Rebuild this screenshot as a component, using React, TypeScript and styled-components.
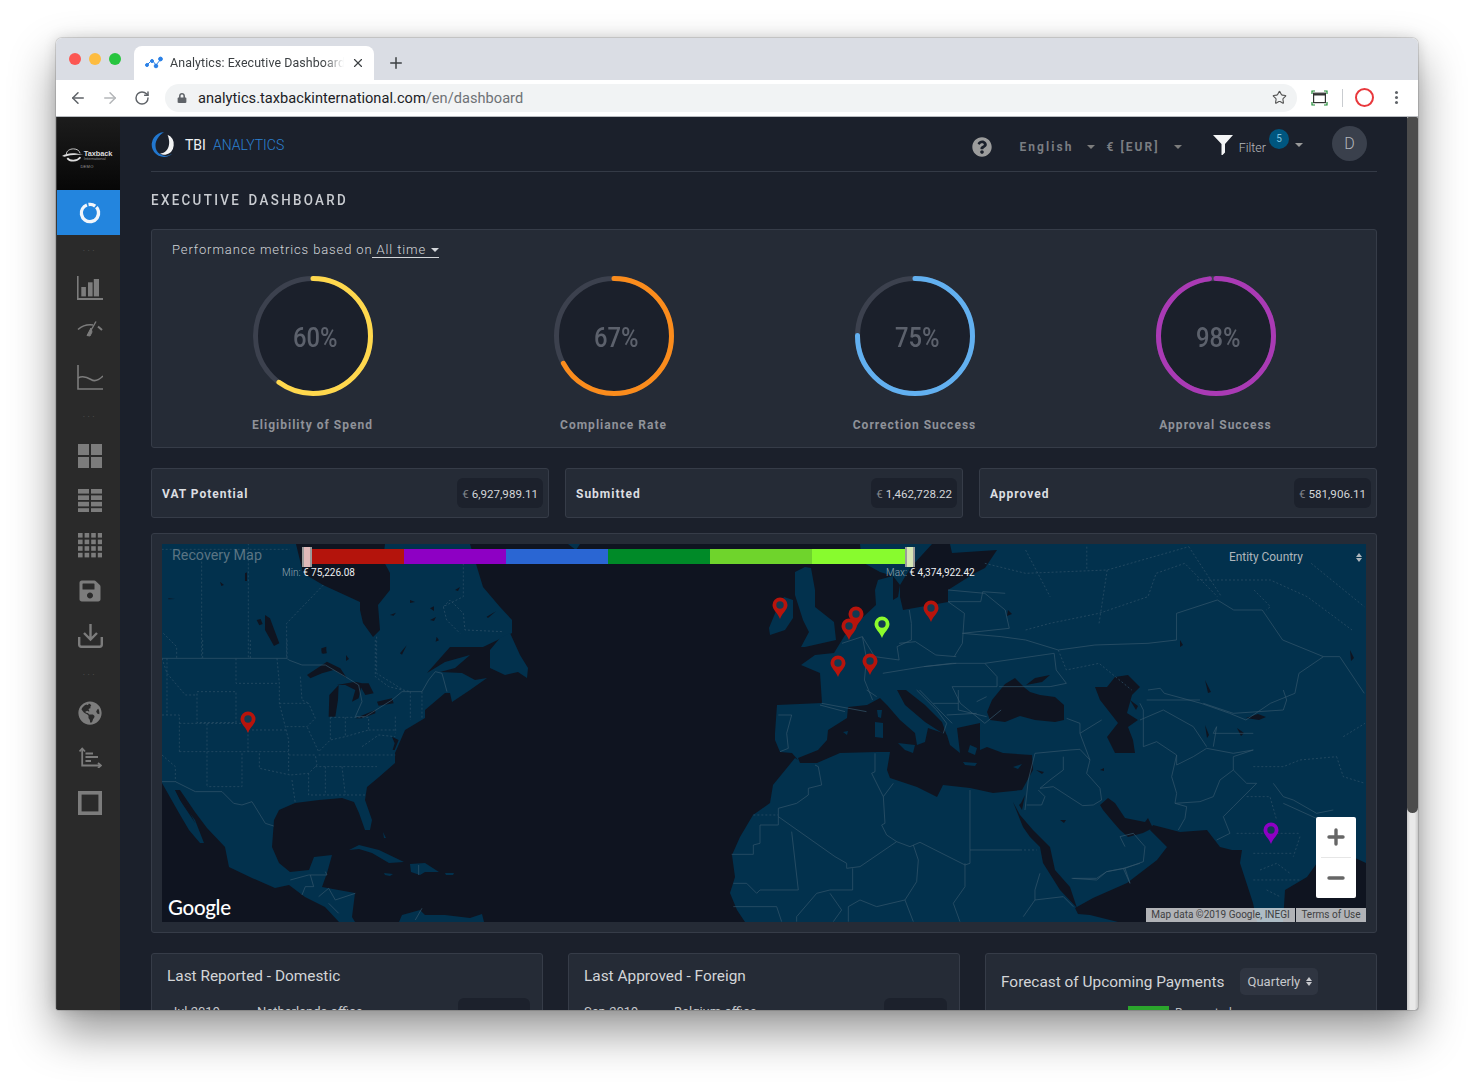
import React from "react";
import styled, { createGlobalStyle } from "styled-components";
import { ArrowLeft, ArrowRight, RotateCw, Star, X, Plus, Minus } from "lucide-react";
import { FaLock, FaSave, FaGlobeAmericas, FaQuestionCircle } from "react-icons/fa";

const Global = createGlobalStyle`
  html, body { margin: 0; padding: 0; background: #fff; height: 1084px; overflow: hidden; }
  * { box-sizing: border-box; }
  body { font-family: Roboto, "Liberation Sans", sans-serif; }
`;

const Stage = styled.div`
  height: 1084px;
  padding: 38px 56px 74px;
`;
const Win = styled.div`
  height: 972px;
  border-radius: 6px 6px 3px 3px;
  overflow: hidden;
  display: flex;
  flex-direction: column;
  background: #fff;
  box-shadow: 0 0 0 1px rgba(0, 0, 0, 0.12), 0 22px 46px rgba(0, 0, 0, 0.42), 0 0 14px rgba(0, 0, 0, 0.14);
`;
const TabStrip = styled.div`
  height: 42px;
  flex: none;
  background: #dadde4;
  display: flex;
  align-items: flex-end;
  padding-left: 13px;
`;
const Lights = styled.div`
  display: flex;
  gap: 8px;
  align-self: flex-start;
  margin-top: 15px;
  width: 65px;
`;
const Light = styled.span<{ $c: string }>`
  width: 12px;
  height: 12px;
  border-radius: 50%;
  background: ${(p) => p.$c};
`;
const Tab = styled.div`
  width: 240px;
  height: 34px;
  background: #fff;
  border-radius: 8px 8px 0 0;
  display: flex;
  align-items: center;
  padding: 0 9px 1px 11px;
  gap: 7px;
  color: #3c4043;
  font: 12.4px "Roboto", sans-serif;
`;
const TabTitle = styled.span`
  flex: 1;
  white-space: nowrap;
  overflow: hidden;
  letter-spacing: 0.1px;
  -webkit-mask-image: linear-gradient(90deg, #000 88%, transparent 100%);
  mask-image: linear-gradient(90deg, #000 88%, transparent 100%);
`;
const NewTab = styled.div`
  height: 34px;
  margin-left: 13px;
  display: flex;
  align-items: center;
  color: #3c4043;
`;
const ToolBar = styled.div`
  height: 37px;
  flex: none;
  background: #fff;
  border-bottom: 1px solid #b9bcc0;
  display: flex;
  align-items: center;
  padding: 0 0 1px 6px;
  color: #5f6368;
`;
const NavBtn = styled.div<{ $dim?: boolean }>`
  width: 32px;
  flex: none;
  display: flex;
  justify-content: center;
  color: ${(p) => (p.$dim ? "#b4b6b9" : "#5f6368")};
`;
const Omni = styled.div`
  width: 1132px;
  flex: none;
  margin-left: 7px;
  height: 28px;
  border-radius: 14px;
  background: #f1f3f4;
  display: flex;
  align-items: center;
  padding: 0 10px 0 12px;
  color: #5f6368;
`;
const Url = styled.div`
  flex: 1;
  margin-left: 11px;
  font: 14.6px "Roboto", sans-serif;
  color: #202124;
  letter-spacing: 0.03px;
  span { color: #6e7276; }
`;
const ExtSep = styled.span`
  width: 1px;
  height: 18px;
  background: #c9ccd0;
  margin: 0 12px 0 14px;
`;
const OperaRing = styled.span`
  width: 19px;
  height: 19px;
  border: 2px solid #e8383c;
  border-radius: 50%;
`;
const MenuDots = styled.span`
  width: 3px;
  height: 3px;
  margin-left: 21px;
  border-radius: 50%;
  background: #5f6368;
  box-shadow: 0 -5px 0 #5f6368, 0 5px 0 #5f6368;
`;
const ExtWrap = styled.div`
  margin-left: 14px;
  display: flex;
`;

const Body = styled.div`
  flex: 1;
  min-height: 0;
  display: flex;
  background: #1b202b;
`;
const Side = styled.nav`
  width: 64px;
  flex: none;
  background: #2a2a2a;
  color: #7c7c7c;
  border-left: 1px solid #3a3a3a;
`;
const BrandBox = styled.div`
  height: 73px;
  background: linear-gradient(#1c1c1c, #070707);
  display: flex;
  flex-direction: column;
  align-items: center;
  justify-content: center;
  padding: 9px 3px 0 0;
  color: #dcdcdc;
`;
const BrandRow = styled.div`
  display: flex;
  align-items: center;
`;
const BrandText = styled.div`
  font: 700 7.4px/7px "Liberation Sans", sans-serif;
  letter-spacing: -0.1px;
  small {
    display: block;
    font: 400 4.2px/4px "Liberation Sans", sans-serif;
    color: #8a8a8a;
  }
`;
const BrandDemo = styled.div`
  font: 400 4px/5px "Liberation Sans", sans-serif;
  color: #9a9a9a;
  letter-spacing: 0.3px;
  margin-top: 1px;
`;
const ActiveItem = styled.div`
  height: 45px;
  background: #2385de;
  display: flex;
  align-items: center;
  justify-content: center;
  padding-left: 3px;
`;
const Dots = styled.div<{ $h: number }>`
  height: ${(p) => p.$h}px;
  display: flex;
  align-items: center;
  justify-content: center;
  font-size: 9px;
  letter-spacing: 2.4px;
  color: #565656;
  line-height: 1;
  padding: 0 0 4px 3px;
`;
const Item = styled.div`
  height: 45px;
  display: flex;
  align-items: center;
  justify-content: center;
  padding-left: 3px;
`;
const GaugeItem = styled(Item)`
  padding-bottom: 8px;
`;

const Scroller = styled.main`
  flex: 1;
  min-width: 0;
  overflow: hidden;
  padding: 0 30px 0 31px;
`;
const ScrollBar = styled.div`
  width: 11px;
  flex: none;
  display: flex;
  flex-direction: column;
  background: linear-gradient(90deg, #c8c8c8, #e9e9e9 30%, #e9e9e9 70%, #c8c8c8);
`;
const Thumb = styled.div`
  height: 696px;
  background: #4c4c4c;
  border-radius: 2px 2px 6px 6px;
`;
const Head = styled.header`
  height: 55px;
  border-bottom: 1px solid #343a46;
  display: flex;
  align-items: center;
`;
const LogoText = styled.div`
  margin-left: 9px;
  padding-top: 2px;
  font: 400 14px "Roboto", sans-serif;
  color: #f0f2f4;
  span { color: #2b80d2; font-weight: 300; margin-left: 7px; }
`;
const HeadRight = styled.div`
  margin-left: auto;
  margin-right: 10px;
  display: flex;
  align-items: center;
  color: #8b8b8b;
  padding-top: 5px;
`;
const HelpIcon = styled.div`
  display: flex;
  color: #9c9c9c;
  margin-right: 28px;
`;
const Lang = styled.span`
  font: 700 12px "Roboto", sans-serif;
  letter-spacing: 2.05px;
  color: #7a7d82;
  white-space: nowrap;
`;
const Caret = styled.span<{ $ml: number; $mr?: number; $c?: string }>`
  width: 0;
  height: 0;
  border-left: 4px solid transparent;
  border-right: 4px solid transparent;
  border-top: 4px solid ${(p) => p.$c || "#7d7d7d"};
  margin-left: ${(p) => p.$ml}px;
  margin-right: ${(p) => p.$mr || 0}px;
`;
const FilterWrap = styled.div`
  margin-left: 31px;
  display: flex;
  align-items: center;
  position: relative;
  padding-bottom: 3px;
`;
const FilterText = styled.span`
  font: 300 12.5px "Roboto", sans-serif;
  color: #b8babd;
  margin: 5px 0 0 6px;
`;
const Badge = styled.span`
  width: 20px;
  height: 20px;
  margin: -12px 0 0 3px;
  border-radius: 50%;
  background: #00567f;
  color: #7ec2de;
  font: 400 10px/20px "Roboto", sans-serif;
  text-align: center;
`;
const Avatar = styled.div`
  width: 35px;
  height: 35px;
  margin: -7px 0 0 29px;
  border-radius: 50%;
  background: #3a404c;
  color: #b4b7bc;
  font: 300 16px/35px "Roboto", sans-serif;
  text-align: center;
`;
const PageTitle = styled.h1`
  height: 57px;
  margin: 0;
  display: flex;
  align-items: center;
  font: 500 14.5px "Roboto", sans-serif;
  letter-spacing: 2.55px;
  color: #c9ccd1;
  word-spacing: 2px;
  transform: scaleX(0.92);
  transform-origin: left center;
`;
const Panel = styled.section`
  background: #252b36;
  border: 1px solid #363c48;
  border-radius: 3px;
`;
const MetricsPanel = styled(Panel)`
  height: 219px;
  padding: 10px;
`;
const MetricsLine = styled.div`
  margin-left: 10px;
  font: 300 13px/20px "Roboto", sans-serif;
  letter-spacing: 0.88px;
  color: #d3d6da;
`;
const AllTime = styled.span`
  display: inline-flex;
  align-items: center;
  border-bottom: 1px solid #d3d6da;
  line-height: 14px;
  padding-left: 4px;
`;
const Gauges = styled.div`
  display: grid;
  grid-template-columns: repeat(4, 1fr);
  margin-top: 16px;
`;
const GaugeCol = styled.div`
  display: flex;
  flex-direction: column;
  align-items: center;
`;
const Ring = styled.div`
  width: 120px;
  height: 120px;
  position: relative;
  margin-left: 1px;
`;
const RingValue = styled.div`
  position: absolute;
  inset: 3px 0 0 5px;
  display: flex;
  align-items: center;
  justify-content: center;
  font: 500 27px "Roboto", sans-serif;
  color: #5c616c;
  span { display: inline-block; transform: scaleX(0.88); }
`;
const GaugeLabel = styled.div`
  margin-top: 21px;
  font: 700 12px/16px "Roboto", sans-serif;
  letter-spacing: 1.02px;
  color: #8f9299;
`;
const StatRow = styled.div`
  display: grid;
  grid-template-columns: repeat(3, 1fr);
  gap: 16px;
  margin-top: 20px;
`;
const StatCard = styled(Panel)`
  height: 50px;
  display: flex;
  align-items: center;
  justify-content: space-between;
  padding: 0 5px 0 10px;
`;
const StatLabel = styled.span`
  font: 700 12px "Roboto", sans-serif;
  letter-spacing: 1px;
  color: #dcdee1;
  padding-top: 1px;
`;
const Chip = styled.span`
  height: 30px;
  display: inline-flex;
  align-items: center;
  padding: 1px 5px 0;
  border-radius: 6px;
  background: #1c212c;
  font: 400 11.6px "Roboto", sans-serif;
  color: #d3d5d8;
  white-space: nowrap;
  em { font-style: normal; color: #7f838a; margin-right: 3px; }
`;
const RowChip = styled(Chip)`
  padding: 1px 9px 0;
`;
const MapPanel = styled(Panel)`
  margin-top: 15px;
  height: 400px;
  padding: 10px;
`;
const MapFrame = styled.div`
  position: relative;
  height: 378px;
  overflow: hidden;
  background: #0f1420;
`;
const MapSvg = styled.svg`
  display: block;
  .land { fill: #02314d; }
  .sea { fill: #0f1420; }
  .b { fill: none; stroke: #34566b; stroke-width: 0.7; vector-effect: non-scaling-stroke; }
  .d { fill: none; stroke: #2f5268; stroke-width: 0.7; stroke-dasharray: 2 2; vector-effect: non-scaling-stroke; }
`;
const MapTitle = styled.div`
  position: absolute;
  left: 10px;
  top: 2px;
  font: 400 14.3px/18px "Roboto", sans-serif;
  color: #5a7483;
`;
const ScaleBar = styled.div`
  position: absolute;
  left: 148px;
  top: 5px;
  width: 596px;
  height: 15px;
  display: flex;
`;
const Seg = styled.div<{ $c: string; $w: number }>`
  width: ${(p) => p.$w}px;
  background: ${(p) => p.$c};
`;
const Handle = styled.div<{ $c: string; $l: number }>`
  position: absolute;
  left: ${(p) => p.$l}px;
  top: 3px;
  width: 10px;
  height: 20px;
  background: ${(p) => p.$c};
  border: 1px solid #9b9b9b;
  border-width: 0 2px;
`;
const ScaleLabel = styled.div<{ $l: number }>`
  position: absolute;
  left: ${(p) => p.$l}px;
  top: 23px;
  font: 400 10px/12px "Roboto", sans-serif;
  color: #eef0f2;
  white-space: nowrap;
  span { color: #93a5b1; font-weight: 300; }
`;
const EntitySelect = styled.div`
  position: absolute;
  right: 4px;
  top: 6px;
  width: 133px;
  display: flex;
  justify-content: space-between;
  align-items: center;
  font: 400 11.9px/15px "Roboto", sans-serif;
  color: #aeb6bc;
`;
const Sorter = styled.span`
  display: flex;
  flex-direction: column;
  gap: 1.5px;
  i {
    display: block;
    width: 0;
    height: 0;
    border-left: 3px solid transparent;
    border-right: 3px solid transparent;
  }
  i:first-child { border-bottom: 4px solid currentColor; }
  i:last-child { border-top: 4px solid currentColor; }
`;
const GoogleMark = styled.div`
  position: absolute;
  left: 6px;
  bottom: 2px;
  font: 500 20.5px/26px "Lato", sans-serif;
  letter-spacing: -0.3px;
  color: #fff;
`;
const Attribution = styled.div`
  position: absolute;
  right: 0;
  bottom: 0;
  display: flex;
  gap: 1px;
`;
const AttrCell = styled.span<{ $w: number }>`
  width: ${(p) => p.$w}px;
  height: 14px;
  background: rgba(255, 255, 255, 0.68);
  font: 400 10px/14px "Roboto", sans-serif;
  color: #3e4042;
  text-align: center;
  white-space: nowrap;
`;
const ZoomCtl = styled.div`
  position: absolute;
  right: 10px;
  top: 273px;
  width: 40px;
  height: 81px;
  background: #fff;
  border-radius: 2px;
  display: flex;
  flex-direction: column;
  align-items: center;
  color: #666;
`;
const ZoomBtn = styled.div`
  height: 40px;
  display: flex;
  align-items: center;
  justify-content: center;
`;
const ZoomLine = styled.div`
  width: 30px;
  height: 1px;
  background: #e6e6e6;
`;
const BottomRow = styled.div`
  display: grid;
  grid-template-columns: repeat(3, 392px);
  gap: 25px;
  margin-top: 20px;
`;
const ListCard = styled(Panel)`
  height: 120px;
  padding: 11px 12px 0 15px;
`;
const CardTitle = styled.div`
  font: 400 15.4px/22px "Roboto", sans-serif;
  color: #d3d5d8;
`;
const ListRow = styled.div`
  display: flex;
  align-items: flex-start;
  margin-top: 11px;
  font: 400 13px/15px "Roboto", sans-serif;
  color: #c6c8cc;
`;
const RowDate = styled.span<{ $pl?: number }>`
  width: 90px;
  padding: 6px 0 0 ${(p) => p.$pl || 0}px;
`;
const RowName = styled.span`
  flex: 1;
  padding-top: 6px;
`;
const ForecastHead = styled.div`
  display: flex;
  align-items: center;
  margin-top: 3px;
`;
const ForecastCard = styled(Panel)`
  height: 120px;
  padding: 11px 15px 0;
`;
const ForecastSelect = styled.div`
  margin-left: 15px;
  width: 78px;
  height: 27px;
  border-radius: 5px;
  background: #2f3541;
  display: flex;
  align-items: center;
  justify-content: space-between;
  padding: 0 6px 0 8px;
  font: 400 13px "Roboto", sans-serif;
  color: #c6c8cc;
`;
const Legend = styled.div`
  display: flex;
  margin: 11px 0 0 127px;
  align-items: flex-start;
  gap: 6px;
  font: 400 12px/14px "Roboto", sans-serif;
  color: #b9bcc0;
`;
const LegendSwatch = styled.span`
  width: 41px;
  height: 16px;
  background: #2ba52c;
`;

const BarChartIcon = () => (
  <svg width="26" height="24" viewBox="0 0 26 24" fill="currentColor">
    <path d="M0 0h1.6v22h24.4v2H0z" />
    <rect x="4.3" y="11" width="4.6" height="9.4" />
    <rect x="11" y="6.3" width="4.6" height="14.1" />
    <rect x="16.8" y="3" width="5.2" height="17.4" />
  </svg>
);
const GaugeIcon = () => (
  <svg width="26" height="17" viewBox="0 0 26 17" fill="none" stroke="currentColor">
    <path d="M1 9.5C5 6 10 4.2 16 5" strokeWidth="1.6" />
    <path d="M21 6.5L25 10" strokeWidth="2" />
    <path d="M11 15.5L19 1.5" strokeWidth="1.4" />
    <path d="M10 15.5L14 8L15 12L13 16Z" fill="currentColor" strokeWidth="1" />
  </svg>
);
const LineChartIcon = () => (
  <svg width="26" height="25" viewBox="0 0 26 25" fill="none" stroke="currentColor" strokeWidth="1.6">
    <path d="M1 0V24H26" />
    <path d="M1 13C6 10 10 12 14 14.5S22 15 26 11" />
  </svg>
);
const Blocks = ({ cols, rows, w, h, gx, gy }: { cols: number; rows: number; w: number; h: number; gx: number; gy: number }) => {
  const cells = [];
  for (let r = 0; r < rows; r++) for (let c = 0; c < cols; c++) cells.push(<rect key={r + "-" + c} x={c * (w + gx)} y={r * (h + gy)} width={w} height={h} />);
  return (
    <svg width={cols * w + (cols - 1) * gx} height={rows * h + (rows - 1) * gy} fill="currentColor">
      {cells}
    </svg>
  );
};
const DownloadIcon = () => (
  <svg width="25" height="25" viewBox="0 0 25 25" fill="none" stroke="currentColor" strokeWidth="2.4">
    <path d="M1.2 14V21.5Q1.2 23.7 3.4 23.7H21.6Q23.8 23.7 23.8 21.5V14" />
    <path d="M12.5 1V16M6 10L12.5 16.5L19 10" />
  </svg>
);
const TreeIcon = () => (
  <svg width="23" height="21" viewBox="0 0 23 21" fill="none" stroke="currentColor" strokeWidth="1.8">
    <path d="M3.2 1.5V18.5H21.5" />
    <path d="M0.5 4.5L3.2 1.5L6 4.5M19 16L22 18.5L19 21" />
    <path d="M6.5 6.5H14M6.5 10H19M6.5 14H12" strokeWidth="2" />
  </svg>
);
const SquareIcon = () => (
  <svg width="24" height="24" viewBox="0 0 24 24" fill="none" stroke="currentColor" strokeWidth="3.6">
    <rect x="1.8" y="1.8" width="20.4" height="20.4" />
  </svg>
);
const ActiveRing = () => (
  <svg width="22" height="22" viewBox="0 0 22 22" fill="none" stroke="#f2f6fb" strokeWidth="3.4">
    <circle cx="11" cy="11" r="8.6" strokeDasharray="7 1.6 43.4 2" transform="rotate(-100 11 11)" />
  </svg>
);
const Swoosh = () => (
  <svg width="22" height="15" viewBox="0 0 25 17" fill="none" stroke="#ddd" strokeWidth="1">
    <path d="M5 7C5 3 9 1 13 1S20 3 20.5 6" />
    <path d="M0 9C6 5.5 14 5 24 8C17 7 8 7.6 3 10Z" fill="#ddd" stroke="none" />
    <path d="M6 11.5C9 15.5 17 15.5 21 10.5" strokeWidth="2" />
  </svg>
);
const TbiLogo = () => (
  <svg width="25" height="25" viewBox="0 0 25 25">
    <path d="M13 0.3A12.3 12.3 0 1 0 21.5 21.5A11 11 0 0 1 9 22C2 18 3 6 13 0.3Z" fill="#2277cf" />
    <path d="M16.5 2.8A10.6 10.6 0 0 1 14.5 22.8C12 22.8 10 22 9 21.4C16 22 21 13 16.5 2.8Z" fill="#f2f3f4" />
  </svg>
);
const Favicon = () => (
  <svg width="18" height="14" viewBox="0 0 18 14" fill="#2a80e6" stroke="#2a80e6">
    <path d="M2 9L7 4L11 9L16 3" fill="none" strokeWidth="1" />
    <circle cx="2" cy="9" r="1.5" /><circle cx="7" cy="5" r="1.5" /><circle cx="11" cy="10" r="1.8" /><circle cx="15.5" cy="3" r="1.9" />
  </svg>
);
const Funnel = () => (
  <svg width="20" height="20" viewBox="0 0 20 20" fill="#f4f5f6">
    <path d="M0 0H20L12 9V17.5L9.5 20H8.5V9Z" />
  </svg>
);
const WindowCap = () => (
  <svg width="17" height="16" viewBox="0 0 17 16" fill="none">
    <path d="M1 4V1H4M13 1H16V4M1 12V15H4M13 15H16V12" stroke="#1d8a33" strokeWidth="1.2" />
    <rect x="2.6" y="3.2" width="11.8" height="9.4" stroke="#333" strokeWidth="1.2" />
    <path d="M2.6 4.5H14.4" stroke="#333" strokeWidth="2" />
  </svg>
);

const Pin = ({ x, y, c }: { x: number; y: number; c: string }) => (
  <g transform={`translate(${x} ${y})`}>
    <path d="M0 0C-2 -6 -7.5 -9 -7.5 -14A7.5 7.5 0 1 1 7.5 -14C7.5 -9 2 -6 0 0Z" fill={c} />
    <circle cy="-14" r="3.7" fill="#123a52" />
  </g>
);

const WorldMap = () => (
  <MapSvg width="1204" height="378" viewBox="162 544 1204 378">
    <path className="land" d="M162 544H296L303 573L323 585L360 602L360 610L363 623L373 637L380 630L378 605L390 590L390 573L383 560L385 544H470L483 587L500 607L512 620L512 633L483 647L450 647L427 673L445 662L470 655L455 668L440 672L462 673L475 680L487 678L470 690L452 702L450 693L445 693L425 710L425 718L405 730L395 753L395 763L379 777L367 787L365 800L372 820L370 830L365 830L359 813L354 802L342 798L319 800L295 803L279 810L274 820L272 847L279 863L290 872L309 870L314 857L332 855L327 873L322 887L355 893L352 917L355 922H339L325 907L305 897L289 885L275 888L252 878L229 867L227 857L225 847L207 828L195 812L180 790H175L180 800L195 820L204 843H200L189 830L179 813L162 783Z" />
    <path className="land" d="M490 650L500 638L510 633L520 655L528 668L527 678L518 672L505 675L490 668Z" />
    <path className="land" d="M349 850L359 845L379 850L404 862L389 863L372 853L359 849Z M410 864L425 863L439 872L425 872L420 875L411 872Z M384 873L393 874L390 876L385 875Z M445 873L454 873L453 875L446 875Z M399 922L402 915L420 910L425 915L445 915L470 918L482 914L484 922Z M568 544H580L576 550Z M383 832L386 838L384 838Z" />
    <path className="land" d="M795 758L773 785L770 803L753 815L740 837L732 855L735 877L730 893L737 910L745 922H1118L1090 915L1078 914L1075 908L1093 898L1127 883L1157 860L1167 847L1160 840L1150 830L1153 825L1180 832L1207 830L1220 847L1232 850L1242 850L1240 863L1253 903L1257 922H1283L1285 890L1307 877L1317 863L1353 857L1366 863V544H860L862 562L880 572L893 576L878 580L875 590L876 605L862 618L845 635L834 653L815 655L801 665L820 673L822 703L777 705L775 733L775 740L780 752L792 753L798 760Z" />
    <path className="land" d="M770 635L769 628L776 611L784 597L793 600L793 618L785 630Z M795 572L805 567L811 568L815 590L815 607L834 622L836 640L805 647L801 647L809 632L803 620L795 595Z" />
    <path className="sea" d="M798 758L818 750L827 740L828 730L847 718L848 707L867 705L880 698L887 705L900 720L915 733L917 745L925 742L928 728L940 732L947 735L950 745L960 753L957 728L980 723L980 750L987 747L1003 753L1032 755L1033 770L1022 790L993 793L970 788L943 785L937 797L917 787L890 778L887 770L890 752L877 752L840 753L817 763L800 763Z" />
    <path className="sea" d="M897 690L906 690L925 705L942 722L947 736L939 731L925 722L905 705Z" />
    <path className="sea" d="M987 712L992 700L1005 684L1015 678L1025 688L1030 692L1040 695L1055 697L1064 705L1064 720L1055 722L1035 720L1020 716L1005 722L990 720Z M1026 685L1035 678L1050 675L1042 682Z" />
    <path className="sea" d="M1095 687L1107 687L1115 677L1128 675L1140 687L1132 695L1127 713L1138 720L1128 727L1133 740L1135 753L1115 753L1107 737L1118 723L1100 700Z" />
    <path className="sea" d="M1013 802L1020 815L1033 830L1050 847L1055 870L1070 887L1077 908L1060 890L1043 863L1040 847L1030 837L1023 827Z" />
    <path className="sea" d="M1100 805L1108 798L1115 803L1125 818L1145 822L1148 818L1153 828L1143 833L1128 837L1120 830L1113 822L1103 810Z M1019 805L1021 803L1025 795L1022 810Z" />
    <path className="sea" d="M932 544H950L952 553L997 550L985 568L975 573L948 590L948 602L903 610L900 597L900 585L911 567Z M893 576L900 585L898 597L893 600Z" />
    <path className="land" d="M898 743L915 745L913 753L905 750Z M875 722L883 723L883 738L875 737Z M877 710L882 710L881 718L878 717Z M963 762L977 763L975 766L965 765Z M1013 767L1022 764L1018 769Z M843 732L848 731L847 735Z M970 745L977 748L975 755L968 752Z" />
    <g fill="#0f1420">
      <path d="M498 555l4-2-2 4z M410 600l5 2-5 1z M430 620l6-3-2 4z M455 590l5-3-2 4z M346 655l3 4-3 2z" />
      <path d="M1060 820h6l-2 3z M1100 770l4-2 0 3z M1036 770l8 2-2 2z M1017 760l6-1-2 2z" />
      <path d="M1246 718l12-4 8 3-7 3z M1205 680l6 12-3 1z M1237 728l7 5-3 3z M1205 725l4 10-2 3z M1350 650l4 8-3 3z M1008 610l4 4-5 2z M1180 640l3 5-3 2z M1130 700l8 6-2 4z" />
    </g>
    <g transform="translate(162 640) scale(.3333)">
      <path className="sea" d="M435 105L495 65L535 85L555 115L515 90L480 100L445 115Z M500 230L502 165L530 135L528 180L520 230Z M525 135L580 125L600 130L590 175L570 185L580 150L550 135Z M590 130L620 130L635 160L610 165Z M580 235L640 210L640 220L600 235Z M645 185L690 175L695 190L650 197Z M40 450L60 490L100 550L80 510L50 450Z M478 25l15 -5l0 20l-14 0Z M690 290l8 20l-6 20l6 0l12-30Z" />
      <path className="b" d="M0 55H375L380 60L420 75H490L550 110L590 135L600 185L580 230H610L690 180L720 155H780L800 120L820 95L840 100L855 155" />
      <path className="b" d="M0 425H40L100 455H180L215 490L240 495L270 485L310 550L335 558" />
      <path className="b" d="M385 720L440 705H495L490 695M420 765L430 740H455L445 705M470 770L500 745L520 780L580 760M500 790L530 820M770 675V705M760 840L780 805" />
      <path className="d" d="M105 155H222V248H105ZM0 225H52V335M52 250H135V440M135 250H258V335M52 335H380M222 55V130H345M345 55L352 130V190L370 260L380 300V400M270 270H378M292 340V385L385 405M240 340V440H135M380 345H460L465 375L440 400L385 405M352 190H440L460 235L435 260L370 260M415 110L420 180L440 190M505 232V300L470 335L435 260M505 232H620V270L550 290L505 300M620 270H705M550 232V290M470 345H700M460 380H645M490 380V465M540 380L550 465M440 400V465H610M390 420L400 490M0 55L15 100L70 165H105M15 55V225M122 0V55M265 0V55M375 0V55M640 0V110L680 140L745 155M745 155V240M780 155V235M700 230V280M600 320L650 285L700 290M0 345L40 380L40 425" />
    </g>
    <g transform="translate(150 530) scale(.3333)">
      <path className="d" d="M520 165L410 280V385M155 95V385M295 40V385M40 310L80 350V385M680 320V430L760 480M35 58H420M880 230L900 210L940 250L945 300L1060 305M940 100V200L880 230L890 270L930 310" />
      <path className="sea" d="M345 255L360 265L388 340L372 348L345 300Z M285 130l6-3l0 26l-6 0Z M55 205l20 2l-20 1Z M515 360l12-3l3 12l-12 2Z M720 255l18-7l-7 9Z M840 235l12-6l0 14Z M750 370l20-24l-14 28Z M1010 260l28-16l-24 20Z M860 320l7 11l-10 4Z M210 155l12 10l-8 3Z M320 270l12-3l6 15l-10 4Z" />
    </g>
    <g transform="translate(720 690) scale(.3333)">
      <path className="b" d="M175 355V405H120V460L100 465V493H35M175 380L345 500L380 520V535L420 530L530 455L570 470L600 457L735 525L750 520V300M175 355L230 340L265 315V295L305 285L295 230L285 225M465 190V245L455 250L490 320L495 400L485 405L500 435L530 455M490 320L520 280M735 520V590L700 640L720 695M580 465L595 510L590 575L555 630L580 695M398 535V600H330L290 610L230 680V695M215 425L235 600H120L110 610L80 580H40M330 610L365 660L340 695M385 695V650L420 630L470 650L555 630M960 550L945 600V630L1030 620L1060 650M945 630L910 680M40 650H170L185 695M750 480H900" />
      <path className="d" d="M100 375H175M900 480H950" />
      <path className="b" d="M915 360L925 270L945 190L1050 180L1080 178L1110 210L1100 250L1140 295L1145 330L1120 345L1088 347L1000 290L960 295L990 270L1030 240L1030 200M920 345H965L975 320L955 300M1060 565H1130L1160 545L1210 535L1260 520M1210 535L1230 580M1040 85L1080 100V130L1110 210M1080 130L1145 90M175 75H215L200 130L205 175L180 185M300 45L375 65" />
      <path className="b" d="M590 0L650 60L680 100L670 130M640 40L715 40M680 75L770 70M715 0V60L800 80M440 0L470 20M770 35L800 20" />
    </g>
    <g transform="translate(1000 690) scale(.3333)">
      <path className="b" d="M430 170L470 155L530 195V225L580 200L620 175L700 190L760 180M530 195L515 260L530 310L525 340L560 350L555 385L535 420M525 340L600 335L640 320L660 270L700 240V200L760 180M700 240L740 280L770 280L700 350L670 380L690 430L650 450M820 280L850 320L880 330L950 370L1000 360M850 340L960 390M430 170V60L420 40M420 90L490 60L580 110L620 170M640 170L650 110L640 130H760M610 40L700 70L850 60L860 30L850 0M440 30H600M375 535L390 580M215 565L290 570L320 545L375 535L430 515L435 470L400 430L360 440L375 470" />
      <path className="d" d="M760 230H850L900 210L1010 200M1010 200L1030 260L1095 280M740 320H810L830 390M710 430H900M760 490H880M780 540L830 520L870 550M800 600L840 620M760 570H900M900 440L880 500M1030 140L1095 100" />
    </g>
    <g transform="translate(740 530) scale(.408 .3333)">
      <path className="b" d="M250 340L300 320L330 380L390 390L385 350L420 330V280L415 240M200 520L310 545M300 320L310 385L305 450L325 510M510 215L550 250L545 340L525 380M390 340L430 335L480 375L530 380M350 430L400 420L450 410L530 400M450 410L520 400H600L630 440V470H520M600 400L770 370L775 420L800 460L760 470L635 470M545 310L640 320L700 330L780 360L870 345L1000 340L1070 330V250L1170 210L1210 240H1280L1330 330L1430 380H1470L1530 490M510 180L600 190L650 240L660 295L545 310M510 215H590L595 185L650 190M1430 380L1370 430L1360 490L1300 520L1240 570L1200 550M1000 480L1030 475L1040 490L1130 520L1200 550M440 480L480 530L520 580M520 470L540 520L600 580L640 540" />
      <path className="d" d="M700 300L760 280L880 250L1000 200L1020 130L1090 100L1170 200M600 100L700 130L900 120L1100 50M780 360L800 420L880 400L960 480M900 120L880 280M1120 150H1300L1390 200L1500 300M1260 180L1300 230L1290 240M1400 100L1530 230M850 50V120M700 60L760 200M1100 50L1180 200" />
    </g>
    <Pin x={248} y={733} c="#b7140c" />
    <Pin x={780} y={619} c="#b7140c" />
    <Pin x={856} y={628} c="#b7140c" />
    <Pin x={849} y={640} c="#b7140c" />
    <Pin x={882} y={638} c="#8cfb2c" />
    <Pin x={931} y={622} c="#b7140c" />
    <Pin x={838} y={677} c="#b7140c" />
    <Pin x={870} y={675} c="#b7140c" />
    <Pin x={1271} y={844} c="#8d00c4" />
  </MapSvg>
);

const Gauge = ({ pct, color, label }: { pct: number; color: string; label: string }) => {
  const r = 57.5;
  const c = 2 * Math.PI * r;
  return (
    <GaugeCol>
      <Ring>
        <svg width="120" height="120" viewBox="0 0 120 120">
          <circle cx="60" cy="60" r={r} fill="#1b202b" stroke="#3c414e" strokeWidth="5" />
          <circle cx="60" cy="60" r={r} fill="none" stroke={color} strokeWidth="5" strokeLinecap="round" strokeDasharray={`${(c * pct) / 100} ${c}`} transform="rotate(-90 60 60)" />
        </svg>
        <RingValue>
          <span>{pct}%</span>
        </RingValue>
      </Ring>
      <GaugeLabel>{label}</GaugeLabel>
    </GaugeCol>
  );
};

const Stat = ({ label, value }: { label: string; value: string }) => (
  <StatCard>
    <StatLabel>{label}</StatLabel>
    <Chip>
      <em>€</em>
      {value}
    </Chip>
  </StatCard>
);

const segs = [
  { c: "#b4140c", w: 94 },
  { c: "#8e00c4", w: 102 },
  { c: "#2a66d3", w: 102 },
  { c: "#008a28", w: 102 },
  { c: "#6fd42c", w: 102 },
  { c: "#88fb2e", w: 94 },
];

export default function App() {
  return (
    <Stage>
      <Global />
      <Win>
        <TabStrip>
          <Lights>
            <Light $c="#fc5753" />
            <Light $c="#fdbc40" />
            <Light $c="#27c53f" />
          </Lights>
          <Tab>
            <Favicon />
            <TabTitle>Analytics: Executive Dashboard</TabTitle>
            <X size={14} strokeWidth={2} />
          </Tab>
          <NewTab>
            <Plus size={18} strokeWidth={2} />
          </NewTab>
        </TabStrip>
        <ToolBar>
          <NavBtn><ArrowLeft size={18} strokeWidth={2} /></NavBtn>
          <NavBtn $dim><ArrowRight size={18} strokeWidth={2} /></NavBtn>
          <NavBtn><RotateCw size={16} strokeWidth={2.2} /></NavBtn>
          <Omni>
            <FaLock size={10} />
            <Url>analytics.taxbackinternational.com<span>/en/dashboard</span></Url>
            <Star size={15} strokeWidth={1.8} color="#555" />
          </Omni>
          <ExtWrap><WindowCap /></ExtWrap>
          <ExtSep />
          <OperaRing />
          <MenuDots />
        </ToolBar>
        <Body>
          <Side>
            <BrandBox>
              <BrandRow>
                <Swoosh />
                <BrandText>Taxback<small>International</small></BrandText>
              </BrandRow>
              <BrandDemo>DEMO</BrandDemo>
            </BrandBox>
            <ActiveItem><ActiveRing /></ActiveItem>
            <Dots $h={30}>...</Dots>
            <Item><BarChartIcon /></Item>
            <GaugeItem><GaugeIcon /></GaugeItem>
            <Item><LineChartIcon /></Item>
            <Dots $h={33}>...</Dots>
            <Item><Blocks cols={2} rows={2} w={11} h={11} gx={2} gy={2} /></Item>
            <Item><Blocks cols={2} rows={4} w={11} h={4.6} gx={2} gy={1.8} /></Item>
            <Item><Blocks cols={4} rows={4} w={4.6} h={4.6} gx={2} gy={2} /></Item>
            <Item><FaSave size={24} /></Item>
            <Item><DownloadIcon /></Item>
            <Dots $h={32}>...</Dots>
            <Item><FaGlobeAmericas size={24} /></Item>
            <Item><TreeIcon /></Item>
            <Item><SquareIcon /></Item>
          </Side>
          <Scroller>
            <Head>
              <TbiLogo />
              <LogoText>TBI<span>ANALYTICS</span></LogoText>
              <HeadRight>
                <HelpIcon><FaQuestionCircle size={20} /></HelpIcon>
                <Lang>English</Lang>
                <Caret $ml={14} $mr={11} />
                <Lang>€ [EUR]</Lang>
                <Caret $ml={14} />
                <FilterWrap>
                  <Funnel />
                  <FilterText>Filter</FilterText>
                  <Badge>5</Badge>
                  <Caret $ml={6} $c="#9a9a9a" />
                </FilterWrap>
                <Avatar>D</Avatar>
              </HeadRight>
            </Head>
            <PageTitle>EXECUTIVE DASHBOARD</PageTitle>
            <MetricsPanel>
              <MetricsLine>
                Performance metrics based on
                <AllTime>
                  All time
                  <Caret $ml={5} $c="#d3d6da" />
                </AllTime>
              </MetricsLine>
              <Gauges>
                <Gauge pct={60} color="#ffd84d" label="Eligibility of Spend" />
                <Gauge pct={67} color="#fb8c1c" label="Compliance Rate" />
                <Gauge pct={75} color="#62b0f0" label="Correction Success" />
                <Gauge pct={98} color="#aa3ab5" label="Approval Success" />
              </Gauges>
            </MetricsPanel>
            <StatRow>
              <Stat label="VAT Potential" value="6,927,989.11" />
              <Stat label="Submitted" value="1,462,728.22" />
              <Stat label="Approved" value="581,906.11" />
            </StatRow>
            <MapPanel>
              <MapFrame>
                <WorldMap />
                <MapTitle>Recovery Map</MapTitle>
                <ScaleBar>
                  {segs.map((s) => (
                    <Seg key={s.c} $c={s.c} $w={s.w} />
                  ))}
                </ScaleBar>
                <Handle $c="#e0b9b9" $l={140} />
                <Handle $c="#d6e6b5" $l={743} />
                <ScaleLabel $l={120}><span>Min: </span>€ 75,226.08</ScaleLabel>
                <ScaleLabel $l={724}><span>Max: </span>€ 4,374,922.42</ScaleLabel>
                <EntitySelect>
                  Entity Country
                  <Sorter><i /><i /></Sorter>
                </EntitySelect>
                <GoogleMark>Google</GoogleMark>
                <ZoomCtl>
                  <ZoomBtn><Plus size={24} strokeWidth={3.4} /></ZoomBtn>
                  <ZoomLine />
                  <ZoomBtn><Minus size={24} strokeWidth={3.4} /></ZoomBtn>
                </ZoomCtl>
                <Attribution>
                  <AttrCell $w={149}>Map data ©2019 Google, INEGI</AttrCell>
                  <AttrCell $w={70}>Terms of Use</AttrCell>
                </Attribution>
              </MapFrame>
            </MapPanel>
            <BottomRow>
              <ListCard>
                <CardTitle>Last Reported - Domestic</CardTitle>
                <ListRow>
                  <RowDate $pl={3}>Jul 2019</RowDate>
                  <RowName>Netherlands office</RowName>
                  <RowChip><em>€</em>2,503.50</RowChip>
                </ListRow>
              </ListCard>
              <ListCard>
                <CardTitle>Last Approved - Foreign</CardTitle>
                <ListRow>
                  <RowDate>Sep 2019</RowDate>
                  <RowName>Belgium office</RowName>
                  <RowChip><em>€</em>587.21</RowChip>
                </ListRow>
              </ListCard>
              <ForecastCard>
                <ForecastHead>
                  <CardTitle>Forecast of Upcoming Payments</CardTitle>
                  <ForecastSelect>
                    Quarterly
                    <Sorter><i /><i /></Sorter>
                  </ForecastSelect>
                </ForecastHead>
                <Legend>
                  <LegendSwatch />
                  Requested
                </Legend>
              </ForecastCard>
            </BottomRow>
          </Scroller>
          <ScrollBar><Thumb /></ScrollBar>
        </Body>
      </Win>
    </Stage>
  );
}
